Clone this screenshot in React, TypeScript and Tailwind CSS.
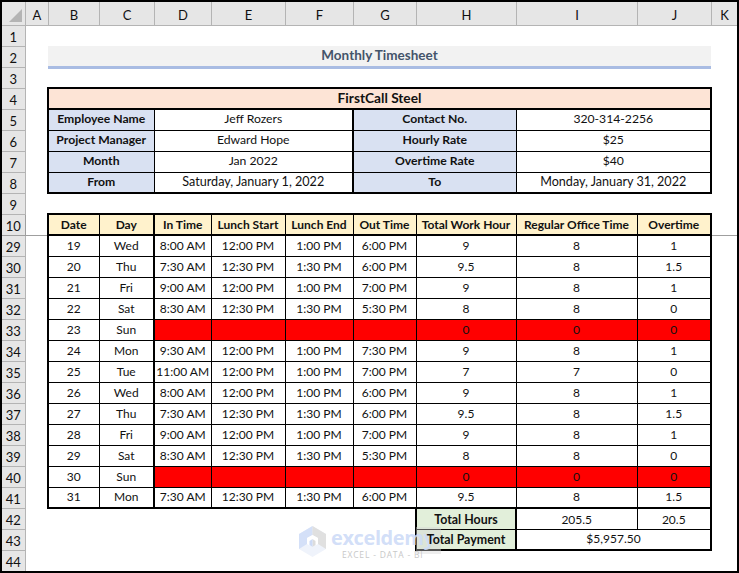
import React from "react";

const cols = ["A", "B", "C", "D", "E", "F", "G", "H", "I", "J", "K"];

type R = [string, string, string, string, string, string, string, string, string, number];
const data: R[] = [
  ["19", "Wed", "8:00 AM", "12:00 PM", "1:00 PM", "6:00 PM", "9", "8", "1", 29],
  ["20", "Thu", "7:30 AM", "12:30 PM", "1:30 PM", "6:00 PM", "9.5", "8", "1.5", 30],
  ["21", "Fri", "9:00 AM", "12:00 PM", "1:00 PM", "7:00 PM", "9", "8", "1", 31],
  ["22", "Sat", "8:30 AM", "12:30 PM", "1:30 PM", "5:30 PM", "8", "8", "0", 32],
  ["23", "Sun", "", "", "", "", "0", "0", "0", 33],
  ["24", "Mon", "9:30 AM", "12:00 PM", "1:00 PM", "7:30 PM", "9", "8", "1", 34],
  ["25", "Tue", "11:00 AM", "12:00 PM", "1:00 PM", "7:00 PM", "7", "7", "0", 35],
  ["26", "Wed", "8:00 AM", "12:00 PM", "1:00 PM", "6:00 PM", "9", "8", "1", 36],
  ["27", "Thu", "7:30 AM", "12:30 PM", "1:30 PM", "6:00 PM", "9.5", "8", "1.5", 37],
  ["28", "Fri", "9:00 AM", "12:00 PM", "1:00 PM", "7:00 PM", "9", "8", "1", 38],
  ["29", "Sat", "8:30 AM", "12:30 PM", "1:30 PM", "5:30 PM", "8", "8", "0", 39],
  ["30", "Sun", "", "", "", "", "0", "0", "0", 40],
  ["31", "Mon", "7:30 AM", "12:30 PM", "1:30 PM", "6:00 PM", "9.5", "8", "1.5", 41],
];

const Num = ({ n, line = false }: { n: number; line?: boolean }) => (
  <td className={`bg-[#e6e6e6] border-r border-b pt-[3px] text-[13px] ${line ? "border-[#9f9f9f]" : "border-[#b4b4b4]"}`}>{n}</td>
);

const Blank = ({ n }: { n: number }) => (
  <tr className="h-[21px]">
    <Num n={n} />
    <td colSpan={11} />
  </tr>
);

const info: [string, string, string, string, number][] = [
  ["Employee Name", "Jeff Rozers", "Contact No.", "320-314-2256", 5],
  ["Project Manager", "Edward Hope", "Hourly Rate", "$25", 6],
  ["Month", "Jan 2022", "Overtime Rate", "$40", 7],
  ["From", "Saturday, January 1, 2022", "To", "Monday, January 31, 2022", 8],
];

const headers = ["Date", "Day", "In Time", "Lunch Start", "Lunch End", "Out Time", "Total Work Hour", "Regular Office Time", "Overtime"];

export default function App() {
  return (
    <div className="relative w-[739px] h-[573px] border-2 border-black bg-white overflow-hidden font-['Lato','Liberation_Sans',sans-serif] text-[12px] leading-none text-[#111]">
      <table className="table-fixed border-collapse w-[735px] text-center">
        <colgroup>
          <col className="w-[23px]" />
          <col className="w-[23px]" />
          <col className="w-[51px]" />
          <col className="w-[55px]" />
          <col className="w-[57px]" />
          <col className="w-[74px]" />
          <col className="w-[68px]" />
          <col className="w-[63px]" />
          <col className="w-[100px]" />
          <col className="w-[121px]" />
          <col className="w-[74px]" />
          <col className="w-[26px]" />
        </colgroup>
        <tbody>
          <tr className="h-[23px]">
            <td className="bg-[#e6e6e6] border-r border-b border-[#b4b4b4] relative">
              <svg className="absolute right-[3px] bottom-[3px] w-[13px] h-[13px]" viewBox="0 0 13 13">
                <path d="M13 0V13H0Z" fill="#b4b4b4" />
              </svg>
            </td>
            {cols.map((c) => (
              <td key={c} className="bg-[#e6e6e6] border-r border-b border-[#b4b4b4] pt-[4px] pl-[1px] text-[13px]">{c}</td>
            ))}
          </tr>
          <Blank n={1} />
          <tr className="h-[21px]">
            <Num n={2} />
            <td />
            <td colSpan={9} className="bg-[#f2f2f2] border-b-[3px] border-[#a9bce3] text-[13.5px] font-bold text-[#44546a]">Monthly Timesheet</td>
            <td />
          </tr>
          <Blank n={3} />
          <tr className="h-[21px]">
            <Num n={4} />
            <td />
            <td colSpan={9} className="bg-[#fde4d6] border-2 border-black pb-[2px] text-[13.7px] font-bold">FirstCall Steel</td>
            <td />
          </tr>
          {info.map(([a, b, c, d, n], i) => (
            <tr key={n} className="h-[21px]">
              <Num n={n} />
              <td />
              <td colSpan={2} className={`bg-[#d9e1f2] border border-black border-l-2 text-[12.2px] font-bold ${i === 0 ? "pb-[2px]" : ""} ${i === 3 ? "border-b-2" : ""}`}>{a}</td>
              <td colSpan={3} className={`border border-black border-r-2 ${i === 0 ? "pb-[2px]" : ""} ${i === 3 ? "border-b-2 text-[12.6px]" : "text-[12.2px]"}`}>{b}</td>
              <td colSpan={2} className={`bg-[#d9e1f2] border border-black border-l-2 text-[12.2px] font-bold ${i === 0 ? "pb-[2px]" : ""} ${i === 3 ? "border-b-2" : ""}`}>{c}</td>
              <td colSpan={2} className={`border border-black border-r-2 ${i === 0 ? "pb-[2px]" : ""} ${i === 3 ? "border-b-2 text-[12.6px]" : "text-[12.2px]"}`}>{d}</td>
              <td />
            </tr>
          ))}
          <Blank n={9} />
          <tr className="h-[21px]">
            <Num n={10} line />
            <td className="border-b border-[#9f9f9f]" />
            {headers.map((h, i) => (
              <td
                key={h}
                className={`bg-[#fff2cc] border border-black border-t-2 border-b-2 font-bold whitespace-nowrap ${i === 0 ? "border-l-2" : ""} ${i === 1 ? "border-r-2" : ""} ${i === 8 ? "border-r-2" : ""}`}
              >
                {h}
              </td>
            ))}
            <td className="border-b border-[#9f9f9f]" />
          </tr>
          {data.map((r, ri) => {
            const off = r[2] === "";
            const last = ri === data.length - 1;
            return (
              <tr key={r[9]} className="h-[21px]">
                <Num n={r[9]} />
                <td />
                {r.slice(0, 9).map((v, i) => (
                  <td
                    key={i}
                    className={`border border-black whitespace-nowrap ${off && i >= 2 ? "bg-[#ff0000]" : ""} ${i === 0 ? "border-l-2" : ""} ${i === 1 || i === 8 ? "border-r-2" : ""} ${last ? "border-b-2" : ""}`}
                  >
                    {v}
                  </td>
                ))}
                <td />
              </tr>
            );
          })}
          <tr className="h-[21px]">
            <Num n={42} />
            <td colSpan={7} />
            <td className="bg-[#e2efda] border border-black border-l-2 border-r-2 border-t-2 pt-[2px] text-[12.4px] font-bold">Total Hours</td>
            <td className="border border-black border-t-2 pt-[2px]">205.5</td>
            <td className="border border-black border-t-2 border-r-2 pt-[2px]">20.5</td>
            <td />
          </tr>
          <tr className="h-[21px]">
            <Num n={43} />
            <td colSpan={7} />
            <td className="bg-[#e2efda] border border-black border-l-2 border-r-2 border-b-2 pt-[1px] text-[12.4px] font-bold">
              <span className="relative z-10">Total Payment</span>
            </td>
            <td colSpan={2} className="border border-black border-r-2 border-b-2">$5,957.50</td>
            <td />
          </tr>
          <Blank n={44} />
        </tbody>
      </table>

      <div className="absolute left-[414px] top-[525px] w-[25px] h-[27px] bg-[#d4d4d4]/40" />
      <div className="absolute left-[296px] top-[524px] flex items-start pointer-events-none">
        <svg className="w-[29px] h-[32px] mr-[4px]" viewBox="0 0 29 32">
          <path d="M14.5 0L28 8V23L14.5 31L1 23V8Z" fill="#eff3fb" />
          <path d="M14.5 0L1 8V23L9 18V12L14.5 9Z" fill="#d4e0f8" />
          <path d="M14.5 0L28 8V23L20 18V12L14.5 9Z" fill="#e0e0e0" />
          <path d="M14.5 9L20 12V18L14.5 21L9 18V12Z" fill="#ffffff" />
          <path d="M14.5 13L17.5 15V19L14.5 21Z" fill="#dcdcdc" />
          <path d="M14.5 13L11.5 15V19L14.5 21Z" fill="#ccdaf6" />
        </svg>
        <div className="flex flex-col items-center">
          <span className="font-['Open_Sans',sans-serif] font-bold text-[20px] leading-[24px] tracking-[-0.4px] text-[#cddbf7]/90">exceldemy</span>
          <span className="font-['Open_Sans',sans-serif] text-[8.5px] leading-[10px] tracking-[0.8px] text-[#c8c8c8]">EXCEL - DATA - BI</span>
        </div>
      </div>
    </div>
  );
}
